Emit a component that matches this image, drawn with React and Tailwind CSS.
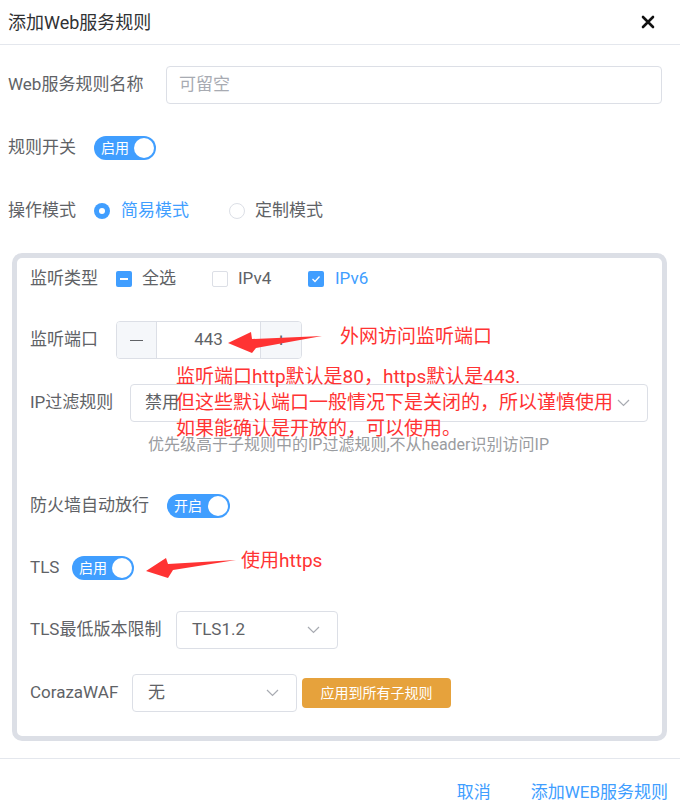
import React from "react";

const FONT = { fontFamily: 'Roboto, "Noto Sans CJK SC", sans-serif' };

const Chevron = () => (
  <svg width="13" height="8" viewBox="0 0 13 8" className="shrink-0">
    <path d="M1 1l5.5 5.5L12 1" fill="none" stroke="#a8abb2" strokeWidth="1.2" />
  </svg>
);

const Switch = ({ text, className = "" }) => (
  <div className={`flex items-center h-[24px] rounded-full bg-[#409eff] pl-[7px] pr-[2px] ${className}`}>
    <span className="text-[14px] leading-none text-white">{text}</span>
    <span className="ml-auto w-[20px] h-[20px] rounded-full bg-white" />
  </div>
);

const Select = ({ value, className = "" }) => (
  <div className={`flex items-center h-[38px] rounded-[4px] border border-[#dcdfe6] bg-white pl-[14px] pr-[17px] ${className}`}>
    <span className="text-[17px] text-[#606266]">{value}</span>
    <span className="ml-auto">
      <Chevron />
    </span>
  </div>
);

const Label = ({ children, className = "" }) => (
  <span className={`shrink-0 text-[17px] text-[#606266] ${className}`}>{children}</span>
);

const Check = ({ state }) => {
  if (state === "none")
    return <span className="w-[16px] h-[16px] rounded-[2px] border border-[#dcdfe6] bg-white" />;
  return (
    <span className="w-[16px] h-[16px] rounded-[2px] bg-[#409eff] flex items-center justify-center">
      {state === "half" ? (
        <span className="w-[8px] h-[2px] bg-white" />
      ) : (
        <svg width="10" height="8" viewBox="0 0 10 8">
          <path d="M1.5 4l2.5 2.5L8.5 1.5" fill="none" stroke="white" strokeWidth="1.3" />
        </svg>
      )}
    </span>
  );
};

export default function App() {
  return (
    <div className="relative w-[680px] h-[811px] bg-white overflow-hidden" style={FONT}>
      {/* header */}
      <div className="flex items-center justify-between h-[45px] pl-2 pr-[25px] border-b border-[#e4e7ed]">
        <span className="text-[18px] text-[#303133]">添加Web服务规则</span>
        <svg width="14" height="14" viewBox="0 0 14 14">
          <path d="M2 2l10 10M12 2L2 12" stroke="#111" strokeWidth="2.6" strokeLinecap="round" />
        </svg>
      </div>

      <div className="px-2 pt-[21px]">
        <div className="flex items-center h-[38px]">
          <Label className="w-[158px]">Web服务规则名称</Label>
          <div className="flex items-center w-[496px] h-[38px] rounded-[4px] border border-[#dcdfe6] px-[12px]">
            <span className="text-[17px] text-[#a8abb2]">可留空</span>
          </div>
        </div>

        <div className="flex items-center h-[38px] mt-[25px]">
          <Label className="w-[86px]">规则开关</Label>
          <Switch text="启用" className="w-[62px]" />
        </div>

        <div className="flex items-center h-[38px] mt-[25px]">
          <Label className="w-[86px]">操作模式</Label>
          <span className="w-[16px] h-[16px] rounded-full bg-[#409eff] flex items-center justify-center">
            <span className="w-[6px] h-[6px] rounded-full bg-white" />
          </span>
          <span className="ml-[11px] w-[108px] text-[17px] text-[#409eff]">简易模式</span>
          <span className="w-[16px] h-[16px] rounded-full border border-[#dcdfe6]" />
          <span className="ml-[10px] text-[17px] text-[#606266]">定制模式</span>
        </div>

        {/* panel */}
        <div className="mt-[23px] mx-[4px] w-[655px] h-[488px] border-[5px] border-[#dcdfe6] rounded-[10px] px-[13px] pt-[2px]">
          <div className="flex items-center h-[38px]">
            <Label className="w-[86px]">监听类型</Label>
            <div className="flex items-center w-[96px]">
              <Check state="half" />
              <span className="ml-[10px] text-[17px] text-[#606266]">全选</span>
            </div>
            <div className="flex items-center w-[96px]">
              <Check state="none" />
              <span className="ml-[10px] text-[17px] text-[#606266]">IPv4</span>
            </div>
            <div className="flex items-center">
              <Check state="on" />
              <span className="ml-[11px] text-[17px] text-[#409eff]">IPv6</span>
            </div>
          </div>

          <div className="flex items-center h-[38px] mt-[23px]">
            <Label className="w-[86px]">监听端口</Label>
            <div className="flex w-[186px] h-[38px] rounded-[4px] border border-[#dcdfe6] overflow-hidden">
              <div className="w-[40px] bg-[#f5f7fa] border-r border-[#dcdfe6] flex items-center justify-center">
                <span className="w-[13px] h-[1px] bg-[#606266]" />
              </div>
              <div className="flex-1 flex items-center justify-center text-[17px] text-[#606266]">443</div>
              <div className="w-[41px] bg-[#f5f7fa] border-l border-[#dcdfe6] flex items-center justify-center text-[18px] text-[#606266]">
                +
              </div>
            </div>
          </div>

          <div className="flex items-center h-[38px] mt-[25px]">
            <Label className="w-[100px]">IP过滤规则</Label>
            <Select value="禁用" className="w-[518px]" />
          </div>

          <div className="mt-[13px] h-[20px] pl-[118px] text-[16px] leading-[20px] text-[#9a9ca0] whitespace-nowrap">
            优先级高于子规则中的IP过滤规则,不从header识别访问IP
          </div>

          <div className="flex items-center h-[38px] mt-[32px]">
            <Label className="w-[137px]">防火墙自动放行</Label>
            <Switch text="开启" className="w-[63px]" />
          </div>

          <div className="flex items-center h-[38px] mt-[24px]">
            <Label className="w-[42px]">TLS</Label>
            <Switch text="启用" className="w-[62px]" />
          </div>

          <div className="flex items-center h-[38px] mt-[24px]">
            <Label className="w-[146px]">TLS最低版本限制</Label>
            <Select value="TLS1.2" className="w-[162px] pl-[15px]" />
          </div>

          <div className="flex items-center h-[38px] mt-[25px]">
            <Label className="w-[102px]">CorazaWAF</Label>
            <Select value="无" className="w-[165px] pl-[15px]" />
            <button className="ml-[5px] w-[149px] h-[30px] rounded-[4px] bg-[#e6a23c] text-[14px] text-white">
              应用到所有子规则
            </button>
          </div>
        </div>
      </div>

      {/* footer */}
      <div className="mt-[17px] border-t border-[#e4e7ed] flex justify-end gap-[40px] pr-[12px] pt-[21px]">
        <span className="text-[17px] leading-[24px] text-[#409eff]">取消</span>
        <span className="text-[17px] leading-[24px] text-[#409eff]">添加WEB服务规则</span>
      </div>

      {/* annotations */}
      <svg className="absolute left-0 top-0 pointer-events-none" width="680" height="811">
        <polygon points="228,343 251,332 252,339 322,336 256,348 252,353" fill="#ff3333" />
        <polygon points="146,571 166,558 168,564 236,560 173,570 168,578" fill="#ff3333" />
      </svg>
      <div className="absolute left-[340px] top-[324px] text-[19px] leading-[26px] text-[#ff3333] whitespace-nowrap">
        外网访问监听端口
      </div>
      <div className="absolute left-[176px] top-[364px] text-[19px] leading-[26px] text-[#ff3333] whitespace-nowrap">
        <div>监听端口http默认是80，https默认是443.</div>
        <div>但这些默认端口一般情况下是关闭的，所以谨慎使用</div>
        <div>如果能确认是开放的，可以使用。</div>
      </div>
      <div className="absolute left-[241px] top-[548px] text-[19px] leading-[26px] text-[#ff3333] whitespace-nowrap">
        使用https
      </div>
    </div>
  );
}
